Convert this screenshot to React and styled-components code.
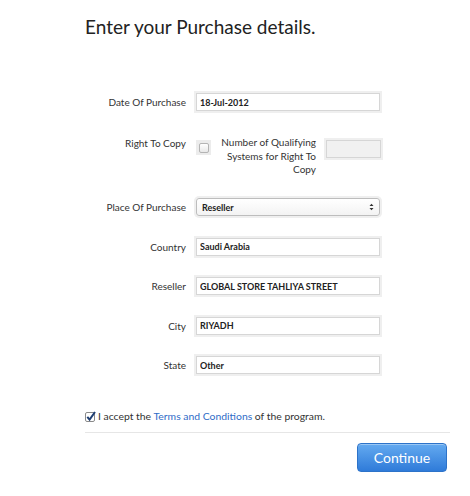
import React from "react";
import styled, { createGlobalStyle } from "styled-components";

const GlobalStyle = createGlobalStyle`
  body {
    margin: 0;
    background: #fff;
    font-family: Lato, "DejaVu Sans", sans-serif;
    color: #333;
  }
`;

const Page = styled.div`
  width: 470px;
  height: 496px;
  padding: 0 20px 0 85px;
  box-sizing: border-box;
`;

const Title = styled.h1`
  margin: 0;
  padding-top: 15px;
  font-size: 19px;
  line-height: 23px;
  font-weight: normal;
  color: #222;
`;

const Form = styled.div`
  margin-top: 55px;
  width: 295px;
  display: flex;
  flex-direction: column;
  gap: 21.5px;
`;

const Row = styled.div`
  display: flex;
  align-items: ${(p) => (p.$top ? "flex-start" : "center")};
  gap: 10px;
  min-height: 18px;
  margin-top: ${(p) => p.$push || 0}px;
`;

const Label = styled.label`
  width: 101px;
  text-align: right;
  font-size: 10px;
  color: #333;
  flex-shrink: 0;
  line-height: 14px;
`;

const Input = styled.input`
  box-sizing: border-box;
  width: ${(p) => p.$w || 184}px;
  height: 18px;
  border: 1px solid #d6d6d6;
  box-shadow: 0 0 0 2px #efefef;
  background: ${(p) => (p.disabled ? "#f1f1f1" : "#fff")};
  padding: 0 3px;
  font-family: Lato, "DejaVu Sans", sans-serif;
  font-size: 9px;
  font-weight: bold;
  color: #222;
  outline: none;
`;

const CopyGroup = styled.div`
  display: flex;
  align-items: flex-start;
  gap: 7px;
`;

const Box = styled.span`
  width: 15px;
  height: 15px;
  margin-top: 4px;
  background: #ececec;
  display: flex;
  align-items: center;
  justify-content: center;
  flex-shrink: 0;
  &::after {
    content: "";
    width: 8px;
    height: 8px;
    border: 1px solid #b4b4b4;
    border-radius: 2px;
    background: linear-gradient(#fff, #e8e8e8);
  }
`;

const Note = styled.span`
  width: 98px;
  text-align: right;
  font-size: 10px;
  line-height: 13.5px;
  color: #333;
`;

const SmallField = styled.div`
  margin-left: 3px;
`;

const Select = styled.div`
  box-sizing: border-box;
  width: 184px;
  height: 18px;
  border: 1px solid #bdbdbd;
  border-radius: 3px;
  box-shadow: 0 0 0 2px #efefef;
  background: linear-gradient(#fff, #f3f3f3);
  display: flex;
  align-items: center;
  justify-content: space-between;
  padding: 0 5px;
  font-size: 9px;
  font-weight: bold;
  color: #222;
`;

const Arrows = styled.svg`
  width: 5px;
  height: 8px;
`;

const Agree = styled.div`
  margin-top: 36px;
  height: 12px;
  display: flex;
  align-items: center;
  gap: 2px;
  font-size: 10.4px;
  color: #333;
`;

const Link = styled.a`
  color: #2f6cc7;
  text-decoration: none;
`;

const Divider = styled.hr`
  border: none;
  border-top: 1px solid #e6e6e6;
  margin: 10px 0 0;
  width: 365px;
`;

const Actions = styled.div`
  width: 362px;
  display: flex;
  justify-content: flex-end;
  margin-top: 10px;
`;

const Button = styled.button`
  width: 90px;
  height: 29px;
  border: 1px solid #2d73c9;
  border-radius: 4px;
  background: linear-gradient(#64aaf0, #2f7bd9);
  color: #fff;
  font-family: Lato, "DejaVu Sans", sans-serif;
  font-size: 14px;
  box-shadow: inset 0 1px 0 rgba(255, 255, 255, 0.35);
`;

const CheckIcon = () => (
  <svg width="11" height="11" viewBox="0 0 11 11">
    <rect x="0.5" y="1.5" width="9" height="9" rx="1.5" fill="#fff" stroke="#8a8a8a" />
    <path d="M2.3 5.8 L4.6 8.6 L10 1" fill="none" stroke="#1f3f73" strokeWidth="2" />
  </svg>
);

const fields = [
  { label: "Country", value: "Saudi Arabia" },
  { label: "Reseller", value: "GLOBAL STORE TAHLIYA STREET" },
  { label: "City", value: "RIYADH" },
  { label: "State", value: "Other" },
];

export default function App() {
  return (
    <Page>
      <GlobalStyle />
      <Title>Enter your Purchase details.</Title>
      <Form>
        <Row>
          <Label>Date Of Purchase</Label>
          <Input defaultValue="18-Jul-2012" />
        </Row>
        <Row $top $push={3.5}>
          <Label>Right To Copy</Label>
          <CopyGroup>
            <Box />
            <Note>Number of Qualifying Systems for Right To Copy</Note>
            <SmallField>
              <Input $w={55} disabled />
            </SmallField>
          </CopyGroup>
        </Row>
        <Row>
          <Label>Place Of Purchase</Label>
          <Select>
            <span>Reseller</span>
            <Arrows viewBox="0 0 5 8">
              <path d="M0.5 3 L2.5 0.8 L4.5 3 Z M0.5 5 L2.5 7.2 L4.5 5 Z" fill="#333" />
            </Arrows>
          </Select>
        </Row>
        {fields.map((f) => (
          <Row key={f.label}>
            <Label>{f.label}</Label>
            <Input defaultValue={f.value} />
          </Row>
        ))}
      </Form>
      <Agree>
        <CheckIcon />
        <span>
          I accept the <Link href="#">Terms and Conditions</Link> of the program.
        </span>
      </Agree>
      <Divider />
      <Actions>
        <Button>Continue</Button>
      </Actions>
    </Page>
  );
}
